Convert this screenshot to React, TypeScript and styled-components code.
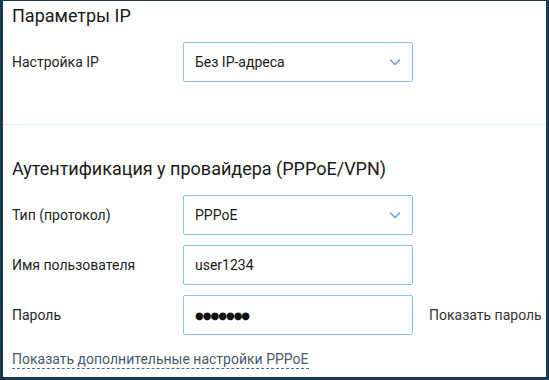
import styled, { createGlobalStyle } from "styled-components";

const GlobalStyle = createGlobalStyle`
    html, body {
        margin: 0;
        padding: 0;
        background: #ffffff;
    }
    body {
        font-family: Roboto, "Liberation Sans", Arial, sans-serif;
        color: #222222;
    }
`;

interface FieldOptions {
    label: string;
    children: JSX.Element;
    aside?: JSX.Element;
}

const Field = ({label, children, aside}: FieldOptions) => {
    return (
        <StyledRow>
            <StyledLabel>{label}</StyledLabel>
            {children}
            {aside}
        </StyledRow>
    );
};

const Chevron = () => (
    <svg width="12" height="8" viewBox="0 0 12 8">
        <path d="M1 1.5 L6 6.5 L11 1.5" fill="none" stroke="#6a9ad2" strokeWidth="1.4" />
    </svg>
);

const Select = ({value}: {value: string}) => (
    <StyledBox>
        <BoxText>{value}</BoxText>
        <Chevron />
    </StyledBox>
);

const App = () => {
    return (
        <>
            <GlobalStyle />
            <Frame>
                <Section>
                    <Title>Параметры IP</Title>
                    <Fields>
                        <Field label="Настройка IP">
                            <Select value="Без IP-адреса" />
                        </Field>
                    </Fields>
                </Section>
                <Divider />
                <Section $second>
                    <Title>Аутентификация у провайдера (PPPoE/VPN)</Title>
                    <Fields>
                        <Field label="Тип (протокол)">
                            <Select value="PPPoE" />
                        </Field>
                        <Field label="Имя пользователя">
                            <StyledBox>
                                <BoxText>user1234</BoxText>
                            </StyledBox>
                        </Field>
                        <Field label="Пароль" aside={<Aside>Показать пароль</Aside>}>
                            <StyledBox>
                                <Dots>●●●●●●●</Dots>
                            </StyledBox>
                        </Field>
                    </Fields>
                    <MoreLink>Показать дополнительные настройки PPPoE</MoreLink>
                </Section>
            </Frame>
        </>
    );
};

const Frame = styled.div`
    box-sizing: border-box;
    width: 549px;
    height: 380px;
    border-style: solid;
    border-color: #173a52;
    border-width: 1px 3px 3px 3px;
    background: #ffffff;
    overflow: hidden;
`;

const Section = styled.div<{ $second?: boolean }>`
    padding: ${props => props.$second ? "32px 9px 0" : "3px 9px 0"};
`;

const Title = styled.h2`
    margin: 0;
    font-size: 18px;
    font-weight: 400;
    line-height: 24px;
    color: #1a1a1a;
`;

const Fields = styled.div`
    display: flex;
    flex-direction: column;
    gap: 10px;
    margin-top: 14px;
`;

const StyledRow = styled.div`
    display: flex;
    align-items: center;
`;

const StyledLabel = styled.div`
    width: 171px;
    flex-shrink: 0;
    font-size: 14px;
    color: #1e1e1e;
`;

const StyledBox = styled.div`
    box-sizing: border-box;
    width: 230px;
    height: 40px;
    flex-shrink: 0;
    display: flex;
    align-items: center;
    justify-content: space-between;
    padding: 0 11px 0 11px;
    border: 1px solid #8cc1e8;
    border-radius: 2px;
`;

const BoxText = styled.span`
    font-size: 14px;
    color: #1a1a1a;
`;

const Dots = styled.span`
    font-family: "DejaVu Sans", sans-serif;
    font-size: 10px;
    letter-spacing: -1px;
    color: #111111;
`;

const Aside = styled.div`
    margin-left: 16px;
    white-space: nowrap;
    font-size: 14px;
    color: #333333;
`;

const Divider = styled.div`
    height: 1px;
    margin-top: 42px;
    background: #d6ebf7;
`;

const MoreLink = styled.div`
    display: inline-block;
    margin-top: 15px;
    font-size: 14px;
    line-height: 18px;
    color: #4a5a68;
    border-bottom: 1px dashed #3b6f9a;
`;

export default App;
